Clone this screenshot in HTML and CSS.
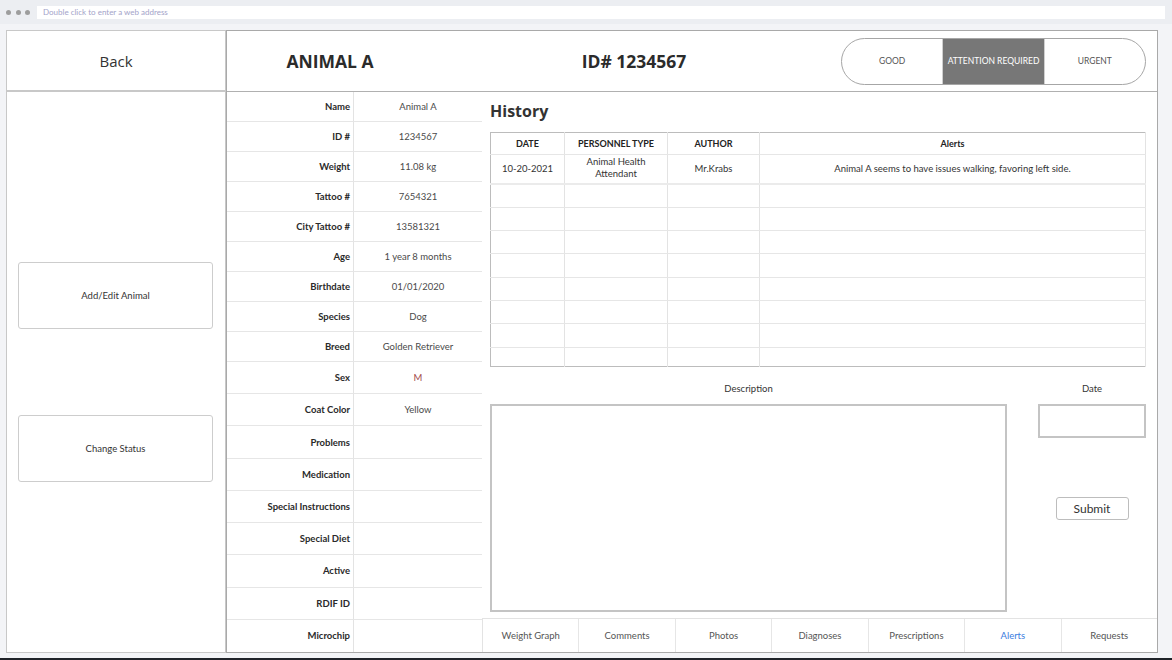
FILE: index.html
```html
<!DOCTYPE html>
<html lang="en">
<head>
<meta charset="utf-8">
<title>Animal A</title>
<link rel="stylesheet" href="styles.css">
</head>
<body>
<div class="chrome">
  <div class="dots"><span></span><span></span><span></span></div>
  <div class="address">Double click to enter a web address</div>
</div>
<div class="app">
  <aside class="side">
    <div class="back">Back</div>
    <div class="side-panel">
      <div class="side-btn">Add/Edit Animal</div>
      <div class="side-btn">Change Status</div>
    </div>
  </aside>
  <main class="main">
    <header class="head">
      <div class="name">ANIMAL A</div>
      <div class="idno">ID# 1234567</div>
      <div class="status">
        <span class="seg">GOOD</span>
        <span class="seg on">ATTENTION REQUIRED</span>
        <span class="seg">URGENT</span>
      </div>
    </header>
    <div class="body">
      <div class="info">
        <div class="lbl">Name</div><div class="val">Animal A</div>
        <div class="lbl">ID #</div><div class="val">1234567</div>
        <div class="lbl">Weight</div><div class="val">11.08 kg</div>
        <div class="lbl">Tattoo #</div><div class="val">7654321</div>
        <div class="lbl">City Tattoo #</div><div class="val">13581321</div>
        <div class="lbl">Age</div><div class="val">1 year 8 months</div>
        <div class="lbl">Birthdate</div><div class="val">01/01/2020</div>
        <div class="lbl">Species</div><div class="val">Dog</div>
        <div class="lbl">Breed</div><div class="val">Golden Retriever</div>
        <div class="lbl">Sex</div><div class="val sex">M</div>
        <div class="lbl">Coat Color</div><div class="val">Yellow</div>
        <div class="lbl">Problems</div><div class="val"></div>
        <div class="lbl">Medication</div><div class="val"></div>
        <div class="lbl">Special Instructions</div><div class="val"></div>
        <div class="lbl">Special Diet</div><div class="val"></div>
        <div class="lbl">Active</div><div class="val"></div>
        <div class="lbl">RDIF ID</div><div class="val"></div>
        <div class="lbl last">Microchip</div><div class="val last"></div>
      </div>
      <section class="detail">
        <div class="detail-inner">
          <h2 class="title">History</h2>
          <table class="hist">
            <colgroup><col class="c1"><col class="c2"><col class="c3"><col></colgroup>
            <thead>
              <tr class="r-head"><th>DATE</th><th>PERSONNEL TYPE</th><th>AUTHOR</th><th>Alerts</th></tr>
            </thead>
            <tbody>
              <tr class="r-first"><td>10-20-2021</td><td>Animal Health<br>Attendant</td><td>Mr.Krabs</td><td>Animal A seems to have issues walking, favoring left side.</td></tr>
              <tr class="r-a"><td></td><td></td><td></td><td></td></tr>
              <tr class="r-b"><td></td><td></td><td></td><td></td></tr>
              <tr class="r-b"><td></td><td></td><td></td><td></td></tr>
              <tr class="r-a"><td></td><td></td><td></td><td></td></tr>
              <tr class="r-b"><td></td><td></td><td></td><td></td></tr>
              <tr class="r-b"><td></td><td></td><td></td><td></td></tr>
              <tr class="r-a"><td></td><td></td><td></td><td></td></tr>
              <tr class="r-end"><td></td><td></td><td></td><td></td></tr>
            </tbody>
          </table>
          <div class="form">
            <div class="desc">
              <div class="flabel">Description</div>
              <div class="textbox"></div>
            </div>
            <div class="datecol">
              <div class="flabel">Date</div>
              <div class="datebox"></div>
              <button class="submit" type="button">Submit</button>
            </div>
          </div>
        </div>
        <nav class="tabs">
          <div class="tab">Weight Graph</div>
          <div class="tab">Comments</div>
          <div class="tab">Photos</div>
          <div class="tab">Diagnoses</div>
          <div class="tab">Prescriptions</div>
          <div class="tab active">Alerts</div>
          <div class="tab">Requests</div>
        </nav>
      </section>
    </div>
  </main>
</div>
<div class="taskbar"></div>
</body>
</html>
```
FILE: styles.css
```css
* { box-sizing: border-box; }

body {
  margin: 0;
  width: 1172px;
  height: 660px;
  overflow: hidden;
  background: #f3f4f7;
  font-family: Lato, "Liberation Sans", sans-serif;
  color: #333;
  display: flex;
  flex-direction: column;
}

/* browser chrome */
.chrome {
  height: 24px;
  flex: none;
  background: #eceef2;
  display: flex;
  align-items: center;
}
.dots {
  display: flex;
  gap: 4.5px;
  margin-left: 6px;
}
.dots span {
  width: 5px;
  height: 5px;
  border-radius: 50%;
  background: #9d9d9d;
}
.address {
  flex: 1;
  margin-left: 7px;
  margin-right: 7px;
  height: 13px;
  background: #fff;
  font-size: 8px;
  line-height: 13px;
  color: #a3a3c9;
  padding-left: 6px;
}

/* app frame */
.app {
  display: flex;
  margin: 6px 0 0 6px;
  height: 623px;
  flex: none;
}

.side {
  width: 220px;
  display: flex;
  flex-direction: column;
}
.back {
  height: 61px;
  border: 1px solid #c8c8c8;
  background: #fff;
  display: flex;
  align-items: center;
  justify-content: center;
  font: 400 15px "Open Sans", sans-serif;
  color: #333;
}
.side-panel {
  flex: 1;
  border: 1px solid #c8c8c8;
  background: #fff;
  padding: 170px 12px 0 11px;
  display: flex;
  flex-direction: column;
  gap: 86px;
}
.side-btn {
  height: 67px;
  border: 1px solid #cdcdcd;
  border-radius: 3px;
  display: flex;
  align-items: center;
  justify-content: center;
  font-size: 9.5px;
  color: #333;
}

.main {
  width: 932px;
  border: 1px solid #a9a9a9;
  background: #fff;
  display: flex;
  flex-direction: column;
}
.head {
  height: 61px;
  flex: none;
  border-bottom: 1px solid #b0b0b0;
  display: flex;
  align-items: center;
}
.name, .idno {
  text-align: center;
  font: 700 17.5px "Open Sans", sans-serif;
  color: #2b2b2b;
}
.name { width: 206px; }
.idno { width: 402px; }
.status {
  margin-left: auto;
  margin-right: 11px;
  width: 305px;
  height: 47px;
  border: 1px solid #a6a6a6;
  border-radius: 24px;
  overflow: hidden;
  display: flex;
}
.seg {
  flex: 1;
  display: flex;
  align-items: center;
  justify-content: center;
  font-size: 8.5px;
  color: #555;
}
.seg.on {
  background: #777;
  color: #fff;
  border-left: 1px solid #d0d0d0;
  border-right: 1px solid #d0d0d0;
}

.body {
  flex: 1;
  display: flex;
  min-height: 0;
}

/* info table */
.info {
  width: 255px;
  flex: none;
  display: grid;
  grid-template-columns: 127px 128px;
  grid-template-rows: repeat(9, 30px) repeat(9, 1fr);
}
.lbl, .val {
  display: flex;
  align-items: center;
  border-bottom: 1px solid #e6e6e6;
  font-size: 9.5px;
}
.lbl {
  justify-content: flex-end;
  padding-right: 3px;
  border-right: 1px solid #e3e3e3;
  font-weight: 700;
  color: #2a2a2a;
}
.val {
  justify-content: center;
  color: #4a4a4a;
}
.val.sex { color: #a34b4b; }
.lbl.last, .val.last { border-bottom: 0; }

/* detail */
.detail {
  flex: 1;
  display: flex;
  flex-direction: column;
}
.detail-inner {
  padding: 9px 11px 0 8px;
}
.title {
  margin: 0;
  font: 700 16px/20px "Open Sans", sans-serif;
  color: #333;
}
.hist {
  margin-top: 11px;
  width: 100%;
  border-collapse: collapse;
  table-layout: fixed;
  border: 1px solid #bcbcbc;
}
.c1 { width: 74px; }
.c2 { width: 103px; }
.c3 { width: 92px; }
.hist th, .hist td {
  border-right: 1px solid #e3e3e3;
  border-bottom: 1px solid #e6e6e6;
  text-align: center;
  padding: 0;
  color: #333;
}
.hist th {
  font-size: 9px;
  font-weight: 700;
  color: #222;
}
.hist td {
  font-size: 9.5px;
  line-height: 12px;
}
.r-head { height: 22px; }
.r-first { height: 29px; }
.r-first td { border-bottom: 2px solid #ebebeb; vertical-align: middle; }
.r-first td:nth-child(2) { padding-bottom: 2px; }
.r-first td:not(:nth-child(2)) { padding-bottom: 0; }
.r-a { height: 24px; }
.r-b { height: 23px; }
.r-end { height: 19px; }
.r-end td { border-bottom: 0; }

.form {
  display: flex;
  gap: 31px;
  margin-top: 14px;
}
.desc { width: 517px; }
.flabel {
  text-align: center;
  font-size: 9.5px;
  line-height: 16px;
  color: #333;
}
.textbox {
  margin-top: 7px;
  height: 208px;
  border: 2px solid #c4c4c4;
}
.datecol {
  width: 108px;
  display: flex;
  flex-direction: column;
  align-items: center;
}
.datebox {
  margin-top: 7px;
  width: 108px;
  height: 34px;
  border: 2px solid #c4c4c4;
}
.submit {
  margin-top: 59px;
  width: 73px;
  height: 23px;
  border: 1px solid #bdbdbd;
  border-radius: 3px;
  background: #fff;
  font: 400 12px Lato, sans-serif;
  color: #333;
  padding: 0;
}

.tabs {
  margin-top: auto;
  height: 34px;
  flex: none;
  display: flex;
  border-top: 1px solid #e3e3e3;
  border-left: 1px solid #e3e3e3;
}
.tab {
  flex: 1;
  display: flex;
  align-items: center;
  justify-content: center;
  border-right: 1px solid #e6e6e6;
  font-size: 9.5px;
  color: #555;
}
.tab:last-child { border-right: 0; }
.tab.active { color: #3b7de0; }

.taskbar {
  margin-top: 5px;
  height: 2px;
  flex: none;
  background: #1f2329;
}
```
